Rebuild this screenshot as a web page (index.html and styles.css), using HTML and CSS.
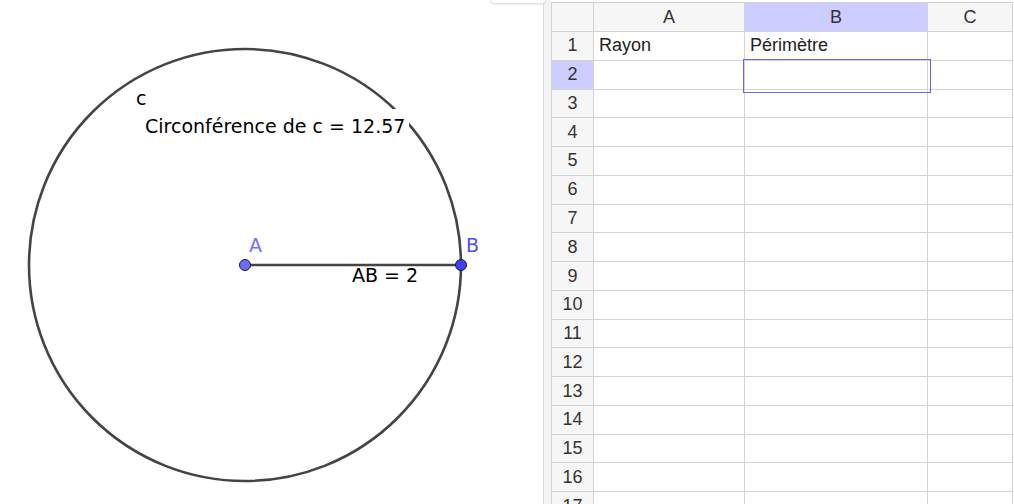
FILE: index.html
```html
<!DOCTYPE html>
<html>
<head>
  <meta charset="utf-8" />
  <title>Cercle et tableur</title>
  <link rel="stylesheet" href="styles.css">
</head>
<body>
  <div class="app">
    <div class="graphics">
      <svg class="canvas" width="543" height="504" viewBox="0 0 543 504">
        <circle cx="245" cy="265" r="216" fill="none" stroke="#444" stroke-width="2.6" />
        <line x1="245" y1="265" x2="461" y2="265" stroke="#444" stroke-width="2.6" />
        <text x="136" y="105" class="lbl">c</text>
        <rect x="140" y="109" width="269" height="28" fill="#fff" />
        <text x="145" y="133" class="lbl">Circonférence de c = 12.57</text>
        <text x="352" y="282" class="lbl">AB = 2</text>
        <text x="249" y="252" class="lbl pt-a">A</text>
        <text x="466" y="252" class="lbl pt-b">B</text>
        <circle cx="245" cy="265" r="5.5" fill="#6d6dff" stroke="#1a1a1a" stroke-width="1" />
        <circle cx="461" cy="265" r="5.5" fill="#4040ff" stroke="#1a1a1a" stroke-width="1" />
      </svg>
      <div class="stylebar-tab"></div>
    </div>
    <div class="divider"></div>
    <div class="sheet">
      <div class="grid">
        <div class="hd"></div>
        <div class="hd">A</div>
        <div class="hd sel">B</div>
        <div class="hd">C</div>

        <div class="rh">1</div><div class="cell">Rayon</div><div class="cell">Périmètre</div><div class="cell"></div>
        <div class="rh sel">2</div><div class="cell"></div><div class="cell"></div><div class="cell"></div>
        <div class="rh">3</div><div class="cell"></div><div class="cell"></div><div class="cell"></div>
        <div class="rh">4</div><div class="cell"></div><div class="cell"></div><div class="cell"></div>
        <div class="rh">5</div><div class="cell"></div><div class="cell"></div><div class="cell"></div>
        <div class="rh">6</div><div class="cell"></div><div class="cell"></div><div class="cell"></div>
        <div class="rh">7</div><div class="cell"></div><div class="cell"></div><div class="cell"></div>
        <div class="rh">8</div><div class="cell"></div><div class="cell"></div><div class="cell"></div>
        <div class="rh">9</div><div class="cell"></div><div class="cell"></div><div class="cell"></div>
        <div class="rh">10</div><div class="cell"></div><div class="cell"></div><div class="cell"></div>
        <div class="rh">11</div><div class="cell"></div><div class="cell"></div><div class="cell"></div>
        <div class="rh">12</div><div class="cell"></div><div class="cell"></div><div class="cell"></div>
        <div class="rh">13</div><div class="cell"></div><div class="cell"></div><div class="cell"></div>
        <div class="rh">14</div><div class="cell"></div><div class="cell"></div><div class="cell"></div>
        <div class="rh">15</div><div class="cell"></div><div class="cell"></div><div class="cell"></div>
        <div class="rh">16</div><div class="cell"></div><div class="cell"></div><div class="cell"></div>
        <div class="rh">17</div><div class="cell"></div><div class="cell"></div><div class="cell"></div>
      </div>
      <div class="selection"></div>
    </div>
  </div>
</body>
</html>
```

FILE: styles.css
```css
html, body {
  margin: 0;
  height: 100%;
  overflow: hidden;
  background: #fff;
}
.app {
  display: flex;
  width: 1014px;
  height: 504px;
  overflow: hidden;
}
.graphics {
  position: relative;
  width: 543px;
  flex: none;
}
.canvas {
  display: block;
}
.lbl {
  font-family: "DejaVu Sans", sans-serif;
  font-size: 19px;
  fill: #000;
}
.pt-a {
  fill: #7070ff;
}
.pt-b {
  fill: #4d4dff;
}
.stylebar-tab {
  position: absolute;
  left: 490px;
  top: -12px;
  width: 54px;
  height: 14px;
  border: 1px solid #e2e2e2;
  border-radius: 0 0 4px 4px;
  background: #fff;
  box-shadow: 0 1px 2px rgba(0, 0, 0, 0.08);
}
.divider {
  flex: none;
  width: 7px;
  border-left: 1px solid #dadada;
  background: #f4f4f4;
}
.sheet {
  position: relative;
  flex: 1;
  padding-top: 2px;
  overflow: hidden;
}
.grid {
  display: grid;
  grid-template-columns: 41px 150px 182px 84px;
  grid-template-rows: 28px;
  grid-auto-rows: 27.78px;
  gap: 1px;
  padding: 1px;
  width: max-content;
  background: #d3d3d3;
  font-family: "Liberation Sans", Arial, sans-serif;
  font-size: 18px;
  color: #222;
}
.hd, .rh {
  background: #f6f6f6;
  display: flex;
  align-items: center;
  justify-content: center;
  color: #333;
}
.hd.sel, .rh.sel {
  background: #ccccff;
}
.cell {
  background: #fff;
  display: flex;
  align-items: center;
  padding-left: 5px;
  overflow: hidden;
  white-space: nowrap;
}
.selection {
  position: absolute;
  left: 192px;
  top: 59px;
  width: 186px;
  height: 32px;
  border: 1px solid #6666ff;
}
```
